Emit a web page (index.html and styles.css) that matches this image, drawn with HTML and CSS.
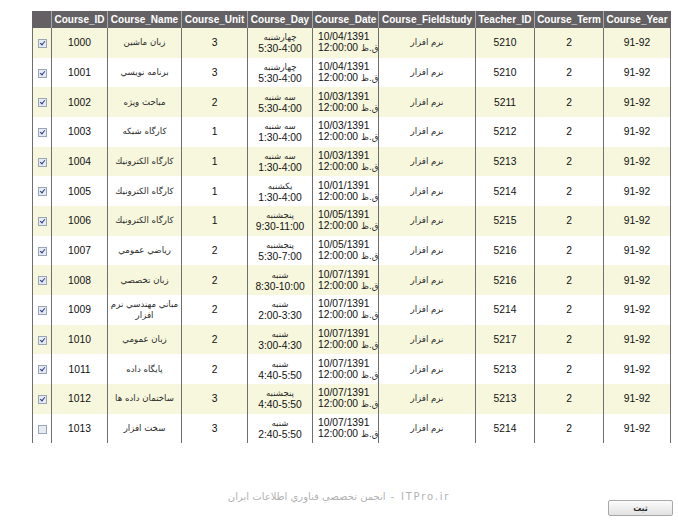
FILE: index.html
```html
<!DOCTYPE html>
<html lang="fa">
<head>
<meta charset="utf-8">
<title>Courses</title>
<link rel="stylesheet" href="styles.css">
</head>
<body>
<div class="page">
  <table class="grid">
    <colgroup>
      <col class="c-chk"><col class="c-id"><col class="c-name"><col class="c-unit"><col class="c-day"><col class="c-date"><col class="c-field"><col class="c-teacher"><col class="c-term"><col class="c-year">
    </colgroup>
    <thead>
      <tr>
        <th></th><th>Course_ID</th><th>Course_Name</th><th>Course_Unit</th><th>Course_Day</th><th>Course_Date</th><th>Course_Fieldstudy</th><th>Teacher_ID</th><th>Course_Term</th><th>Course_Year</th>
      </tr>
    </thead>
    <tbody>
      <tr><td><span class="chk on"></span></td><td>1000</td><td class="fa">زبان ماشين</td><td>3</td><td><span class="fa">چهارشنبه</span><br>5:30-4:00</td><td class="date">10/04/1391<br><span class="ib">12:00:00</span> <span class="fa ib">ق.ظ</span></td><td class="fa">نرم افزار</td><td>5210</td><td>2</td><td>91-92</td></tr>
      <tr><td><span class="chk on"></span></td><td>1001</td><td class="fa">برنامه نويسي</td><td>3</td><td><span class="fa">چهارشنبه</span><br>5:30-4:00</td><td class="date">10/04/1391<br><span class="ib">12:00:00</span> <span class="fa ib">ق.ظ</span></td><td class="fa">نرم افزار</td><td>5210</td><td>2</td><td>91-92</td></tr>
      <tr><td><span class="chk on"></span></td><td>1002</td><td class="fa">مباحث ويژه</td><td>2</td><td><span class="fa">سه شنبه</span><br>5:30-4:00</td><td class="date">10/03/1391<br><span class="ib">12:00:00</span> <span class="fa ib">ق.ظ</span></td><td class="fa">نرم افزار</td><td>5211</td><td>2</td><td>91-92</td></tr>
      <tr><td><span class="chk on"></span></td><td>1003</td><td class="fa">كارگاه شبكه</td><td>1</td><td><span class="fa">سه شنبه</span><br>1:30-4:00</td><td class="date">10/03/1391<br><span class="ib">12:00:00</span> <span class="fa ib">ق.ظ</span></td><td class="fa">نرم افزار</td><td>5212</td><td>2</td><td>91-92</td></tr>
      <tr><td><span class="chk on"></span></td><td>1004</td><td class="fa">كارگاه الكترونيك</td><td>1</td><td><span class="fa">سه شنبه</span><br>1:30-4:00</td><td class="date">10/03/1391<br><span class="ib">12:00:00</span> <span class="fa ib">ق.ظ</span></td><td class="fa">نرم افزار</td><td>5213</td><td>2</td><td>91-92</td></tr>
      <tr><td><span class="chk on"></span></td><td>1005</td><td class="fa">كارگاه الكترونيك</td><td>1</td><td><span class="fa">يكشنبه</span><br>1:30-4:00</td><td class="date">10/01/1391<br><span class="ib">12:00:00</span> <span class="fa ib">ق.ظ</span></td><td class="fa">نرم افزار</td><td>5214</td><td>2</td><td>91-92</td></tr>
      <tr><td><span class="chk on"></span></td><td>1006</td><td class="fa">كارگاه الكترونيك</td><td>1</td><td><span class="fa">پنجشنبه</span><br>9:30-11:00</td><td class="date">10/05/1391<br><span class="ib">12:00:00</span> <span class="fa ib">ق.ظ</span></td><td class="fa">نرم افزار</td><td>5215</td><td>2</td><td>91-92</td></tr>
      <tr><td><span class="chk on"></span></td><td>1007</td><td class="fa">رياضي عمومي</td><td>2</td><td><span class="fa">پنجشنبه</span><br>5:30-7:00</td><td class="date">10/05/1391<br><span class="ib">12:00:00</span> <span class="fa ib">ق.ظ</span></td><td class="fa">نرم افزار</td><td>5216</td><td>2</td><td>91-92</td></tr>
      <tr><td><span class="chk on"></span></td><td>1008</td><td class="fa">زبان تخصصي</td><td>2</td><td><span class="fa">شنبه</span><br>8:30-10:00</td><td class="date">10/07/1391<br><span class="ib">12:00:00</span> <span class="fa ib">ق.ظ</span></td><td class="fa">نرم افزار</td><td>5216</td><td>2</td><td>91-92</td></tr>
      <tr><td><span class="chk on"></span></td><td>1009</td><td class="fa">مباني مهندسي نرم<br>افزار</td><td>2</td><td><span class="fa">شنبه</span><br>2:00-3:30</td><td class="date">10/07/1391<br><span class="ib">12:00:00</span> <span class="fa ib">ق.ظ</span></td><td class="fa">نرم افزار</td><td>5214</td><td>2</td><td>91-92</td></tr>
      <tr><td><span class="chk on"></span></td><td>1010</td><td class="fa">زبان عمومي</td><td>2</td><td><span class="fa">شنبه</span><br>3:00-4:30</td><td class="date">10/07/1391<br><span class="ib">12:00:00</span> <span class="fa ib">ق.ظ</span></td><td class="fa">نرم افزار</td><td>5217</td><td>2</td><td>91-92</td></tr>
      <tr><td><span class="chk on"></span></td><td>1011</td><td class="fa">پايگاه داده</td><td>2</td><td><span class="fa">شنبه</span><br>4:40-5:50</td><td class="date">10/07/1391<br><span class="ib">12:00:00</span> <span class="fa ib">ق.ظ</span></td><td class="fa">نرم افزار</td><td>5213</td><td>2</td><td>91-92</td></tr>
      <tr><td><span class="chk on"></span></td><td>1012</td><td class="fa">ساختمان داده ها</td><td>3</td><td><span class="fa">پنجشنبه</span><br>4:40-5:50</td><td class="date">10/07/1391<br><span class="ib">12:00:00</span> <span class="fa ib">ق.ظ</span></td><td class="fa">نرم افزار</td><td>5213</td><td>2</td><td>91-92</td></tr>
      <tr><td><span class="chk"></span></td><td>1013</td><td class="fa">سخت افزار</td><td>3</td><td><span class="fa">شنبه</span><br>2:40-5:50</td><td class="date">10/07/1391<br><span class="ib">12:00:00</span> <span class="fa ib">ق.ظ</span></td><td class="fa">نرم افزار</td><td>5214</td><td>2</td><td>91-92</td></tr>
    </tbody>
  </table>
  <div class="footer">
    <p class="credit" dir="rtl">ITPro.ir - انجمن تخصصي فناوري اطلاعات ايران</p>
    <button class="submit" type="button">ثبت</button>
  </div>
</div>
</body>
</html>
```

FILE: styles.css
```css
html, body {
  margin: 0;
  padding: 0;
  background: #ffffff;
}

.page {
  width: 678px;
  font-family: "Liberation Sans", Arial, sans-serif;
}

.grid {
  width: 638px;
  margin: 11px 0 0 32px;
  table-layout: fixed;
  border-collapse: collapse;
  font-size: 10.3px;
  color: #111;
}

.c-chk { width: 19px; }
.c-id { width: 56px; }
.c-name { width: 74px; }
.c-unit { width: 66px; }
.c-day { width: 65px; }
.c-date { width: 66px; }
.c-field { width: 97px; }
.c-teacher { width: 59px; }
.c-term { width: 69px; }
.c-year { width: 67px; }

.grid th {
  height: 17px;
  padding: 0;
  background: #636163;
  color: #ffffff;
  font-weight: bold;
  font-size: 10px;
  white-space: nowrap;
  border-left: 1px solid #a9a9a9;
  border-right: 1px solid #a9a9a9;
}

.grid th:first-child { border-left-color: #636163; }
.grid th:last-child { border-right-color: #636163; }

.grid td {
  height: 29.67px;
  padding: 0 2px;
  text-align: center;
  vertical-align: middle;
  line-height: 11px;
  border-left: 1px solid #6e6e6e;
  border-right: 1px solid #6e6e6e;
}

.grid tbody tr:nth-child(odd) td { background: #f7f7de; }
.grid tbody tr:nth-child(even) td { background: #ffffff; }

.grid td.date {
  text-align: left;
  padding-left: 5px;
  padding-right: 0;
  white-space: nowrap;
}

.grid td.fa {
  padding: 0;
  white-space: nowrap;
}

.fa {
  font-family: "DejaVu Sans", sans-serif;
  font-size: 8.6px;
  color: #2a2a2a;
}

.ib {
  display: inline-block;
}

.chk {
  display: inline-block;
  width: 7px;
  height: 7px;
  border: 1px solid #9aa6b8;
  background: #e6eaf1;
  vertical-align: middle;
  position: relative;
}

.chk.on::after {
  content: "";
  position: absolute;
  left: 2px;
  top: 0px;
  width: 2px;
  height: 4px;
  border-right: 1.5px solid #2d3e8c;
  border-bottom: 1.5px solid #2d3e8c;
  transform: rotate(40deg);
}

.footer {
  display: grid;
  grid-template-columns: 1fr auto 1fr;
  align-items: start;
  width: 678px;
  margin-top: 47px;
}

.credit {
  grid-column: 2;
  margin: 0;
  line-height: 13px;
  font-family: "DejaVu Sans", "Liberation Sans", sans-serif;
  font-size: 10px;
  letter-spacing: 1.8px;
  color: #b2b2b2;
  white-space: nowrap;
}

.submit {
  grid-column: 3;
  justify-self: end;
  width: 65px;
  height: 16px;
  margin: 10px 5px 0 0;
  padding: 0;
  border: 1px solid #a8a8a8;
  border-radius: 2px;
  background: linear-gradient(#fbfbfb, #e2e2e2);
  font-family: "DejaVu Sans", sans-serif;
  font-size: 8px;
  font-weight: bold;
  color: #222;
}
```
